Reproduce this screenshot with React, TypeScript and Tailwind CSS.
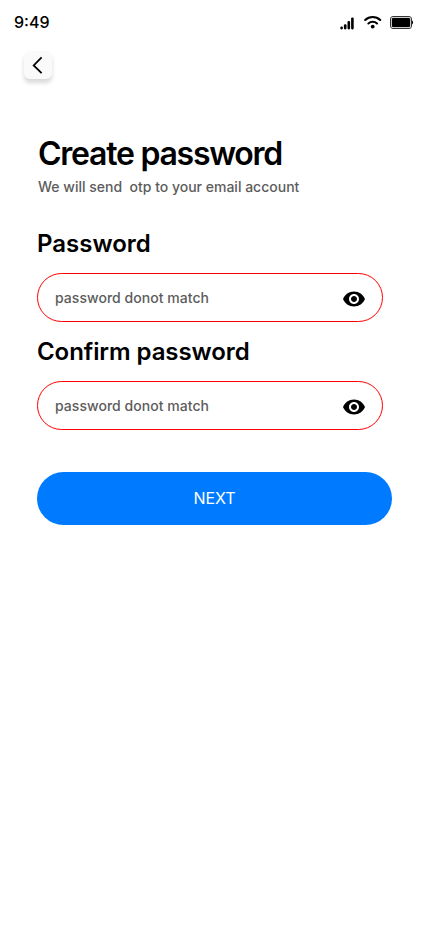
import React from "react";

function StatusIcons() {
  return (
    <div className="flex items-center">
      <svg width="14" height="13" viewBox="0 0 14 13" className="mt-0.5 mr-[10px]">
        <rect x="0.3" y="9.6" width="2.6" height="2.8" rx="1.1" />
        <rect x="3.9" y="7.2" width="2.6" height="5.2" rx="1.1" />
        <rect x="7.5" y="4" width="2.6" height="8.4" rx="1.1" />
        <rect x="11.1" y="0.4" width="2.6" height="12" rx="1.1" />
      </svg>
      <svg width="18" height="14" viewBox="0 0 18 14" className="mr-2" fill="none" stroke="black" strokeWidth="2.1" strokeLinecap="round">
        <path d="M1.2 5a10.8 10.8 0 0 1 15 0" />
        <path d="M4.4 8.5a6.3 6.3 0 0 1 8.6 0" />
        <circle cx="8.7" cy="11.6" r="1.9" fill="black" stroke="none" />
      </svg>
      <svg width="24" height="13" viewBox="0 0 24 13">
        <rect x="0.5" y="0.5" width="21" height="12" rx="2.5" fill="none" stroke="#333333" />
        <rect x="1.2" y="1.2" width="19.6" height="10.6" rx="1.8" fill="#bdbdbd" />
        <rect x="2" y="2" width="18" height="9" rx="1" />
        <path d="M22 4.5v4c1.2-.4 1.5-3.4 0-4z" />
      </svg>
    </div>
  );
}

function Field({ label, labelClass }: { label: string; labelClass: string }) {
  return (
    <label className="block h-[108px]">
      <span className={`block text-2xl leading-[29px] font-semibold ${labelClass}`}>{label}</span>
      <span className="mt-[15px] flex h-[49px] w-[346px] items-center justify-between rounded-full border border-[#ff0000] pr-4 pl-[17px]">
        <span className="text-sm font-medium tracking-[0.04px] text-[#5c5c5c]">password donot match</span>
        <svg width="24" height="24" viewBox="0 0 24 24" className="mt-[3px]">
          <path d="M12 4.5C7 4.5 2.73 7.61 1 12c1.73 4.39 6 7.5 11 7.5s9.27-3.11 11-7.5c-1.73-4.39-6-7.5-11-7.5zM12 17c-2.76 0-5-2.24-5-5s2.24-5 5-5 5 2.24 5 5-2.24 5-5 5zm0-8c-1.66 0-3 1.34-3 3s1.34 3 3 3 3-1.34 3-3-1.34-3-3-3z" />
        </svg>
      </span>
    </label>
  );
}

export default function App() {
  return (
    <main className="flex h-[932px] w-[430px] flex-col bg-white font-['Inter',sans-serif] text-black">
      <header className="flex h-11 items-center justify-between pr-4 pl-[14px]">
        <span className="text-base font-medium">9:49</span>
        <StatusIcons />
      </header>
      <button className="mt-[7px] ml-6 flex size-7 items-center justify-center rounded-md bg-[#fafafa] shadow-[0_4px_4px_rgba(0,0,0,0.15)]">
        <svg width="12" height="18" viewBox="0 0 12 18" fill="none" stroke="black" strokeWidth="1.8">
          <path d="M9.6 1.4L1.7 9.4l7.9 7.8" />
        </svg>
      </button>
      <h1 className="mt-[54px] ml-[38px] text-[32px] leading-[41px] font-semibold tracking-[-1.25px]">Create password</h1>
      <p className="mt-[3px] ml-[38px] text-sm leading-5 font-medium whitespace-pre text-[#5c5c5c]">We will send  otp to your email account</p>
      <section className="mt-8 ml-[37px]">
        <Field label="Password" labelClass="" />
        <Field label="Confirm password" labelClass="tracking-[-0.08px]" />
      </section>
      <button className="mt-[27px] ml-[37px] h-[53px] w-[355px] rounded-full bg-[#007bff] pb-0.5 text-base tracking-[-0.1px] text-white">NEXT</button>
    </main>
  );
}
